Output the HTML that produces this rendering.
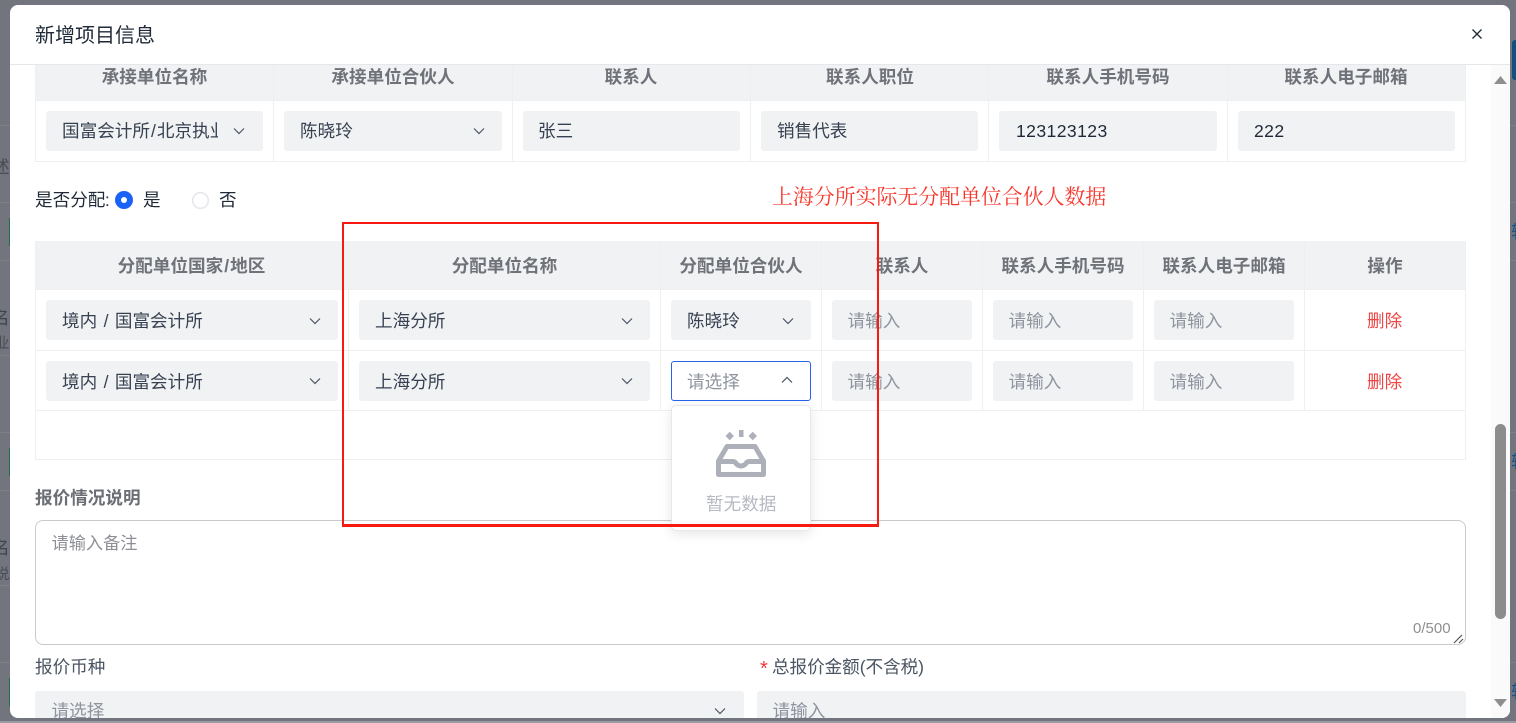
<!DOCTYPE html>
<html lang="zh-CN">
<head>
<meta charset="utf-8">
<title>新增项目信息</title>
<style>
html,body{margin:0;padding:0;width:1516px;height:723px;overflow:hidden;background:#72757d}
body{position:relative;font-family:"Liberation Sans","Noto Sans CJK SC",sans-serif;font-size:17.6px;color:#1f2937}
div,svg{position:absolute;box-sizing:border-box;white-space:nowrap}
em{font-style:normal}
.bl{height:1px;background:#7d8087}
.bg{color:#3f434c;font-size:17.6px;line-height:24px}
.bb{color:#1a5286;font-size:17.6px;line-height:24px}
#modal{left:10px;top:5px;width:1500px;height:713px;background:#fff;border-radius:8px;overflow:hidden}
#c{left:-10px;top:-5px;width:1516px;height:723px}
.h{background:#f1f2f4}
.th{top:0;height:24px;line-height:24px;font-weight:700;color:#6f7278;text-align:center}
.ln{background:#eeeff1}
.i{height:40px;background:#f1f2f4;border-radius:3px}
.t{height:24px;line-height:24px}
.p{color:#8f949e}
.lb{color:#4b5563}
</style>
</head>
<body>
<div class="bl" style="left:0;width:10px;top:125px"></div>
<div class="bl" style="left:0;width:10px;top:202px"></div>
<div class="bl" style="left:0;width:10px;top:260px"></div>
<div class="bl" style="left:0;width:10px;top:355px"></div>
<div class="bl" style="left:0;width:10px;top:432px"></div>
<div class="bl" style="left:0;width:10px;top:490px"></div>
<div class="bl" style="left:0;width:10px;top:585px"></div>
<div class="bl" style="left:0;width:10px;top:662px"></div>
<div class="bl" style="left:1510px;width:6px;top:125px"></div>
<div class="bl" style="left:1510px;width:6px;top:202px"></div>
<div class="bl" style="left:1510px;width:6px;top:260px"></div>
<div class="bl" style="left:1510px;width:6px;top:432px"></div>
<div class="bl" style="left:1510px;width:6px;top:490px"></div>
<div class="bl" style="left:1510px;width:6px;top:662px"></div>
<div style="left:0;top:721px;width:1516px;height:2px;background:#9a9ca2"></div>

<div class="bg" style="left:-8px;top:155px;color:#4a4d55">述</div>
<div class="bg" style="left:-8px;top:306px">名</div>
<div class="bg" style="left:-5px;top:332px;font-size:14.500px;color:#4a4d55">业</div>
<div class="bg" style="left:-8px;top:536px">名</div>
<div class="bg" style="left:-5px;top:563px;font-size:14.500px;color:#4a4d55">说</div>
<div style="left:9px;top:218px;width:1px;height:28px;background:#1f6b4a"></div>
<div style="left:9px;top:448px;width:1px;height:28px;background:#1f6b4a"></div>
<div style="left:9px;top:678px;width:1px;height:28px;background:#1f6b4a"></div>
<div style="left:1512px;top:40px;width:8px;height:40px;background:#14507f;border-radius:3px"></div>
<div class="bb" style="left:1511px;top:220px">转</div>
<div class="bb" style="left:1511px;top:450px">转</div>
<div class="bb" style="left:1511px;top:680px">转</div>

<div id="modal"><div id="c">
  <div class="t" style="left:35px;top:24px;font-size:20px;color:#1f2937">新增项目信息</div>
  <svg style="left:1470px;top:27px" width="14" height="14" viewBox="0 0 14 14"><path d="M2.500 2.500L11.500 11.500M11.500 2.500L2.500 11.500" stroke="#1f2937" stroke-width="1.300" fill="none"/></svg>

  <!-- table 1 -->
  <div class="h" style="left:35px;top:65px;width:1431px;height:35px"></div>
  <div class="ln" style="left:35px;top:100px;width:1431px;height:1px"></div>
  <div class="ln" style="left:35px;top:161px;width:1431px;height:1px"></div>
  <div class="ln" style="left:35px;top:65px;width:1px;height:97px"></div>
  <div class="ln" style="left:273px;top:65px;width:1px;height:97px"></div>
  <div class="ln" style="left:512px;top:65px;width:1px;height:97px"></div>
  <div class="ln" style="left:750px;top:65px;width:1px;height:97px"></div>
  <div class="ln" style="left:988px;top:65px;width:1px;height:97px"></div>
  <div class="ln" style="left:1227px;top:65px;width:1px;height:97px"></div>
  <div class="ln" style="left:1465px;top:65px;width:1px;height:97px"></div>
  <div class="th" style="left:35px;top:65px;width:239px">承接单位名称</div>
  <div class="th" style="left:274px;top:65px;width:238px">承接单位合伙人</div>
  <div class="th" style="left:512px;top:65px;width:238px">联系人</div>
  <div class="th" style="left:751px;top:65px;width:238px">联系人职位</div>
  <div class="th" style="left:989px;top:65px;width:238px">联系人手机号码</div>
  <div class="th" style="left:1227px;top:65px;width:238px">联系人电子邮箱</div>

  <div class="i" style="left:46px;top:111px;width:217px"></div>
  <div class="t" style="left:62px;top:119px;width:156px;overflow:hidden;color:#374151">国富会计所<em style="padding:0 1px">/</em>北京执业所</div>
  <svg style="left:233px;top:125px" width="12" height="12" viewBox="0 0 12 12"><path d="M1 3.500L6 8.500L11 3.500" stroke="#4b5563" stroke-width="1.200" fill="none"/></svg>
  <div class="i" style="left:284px;top:111px;width:218px"></div>
  <div class="t" style="left:300px;top:119px;color:#374151">陈晓玲</div>
  <svg style="left:473px;top:125px" width="12" height="12" viewBox="0 0 12 12"><path d="M1 3.500L6 8.500L11 3.500" stroke="#4b5563" stroke-width="1.200" fill="none"/></svg>
  <div class="i" style="left:523px;top:111px;width:217px"></div>
  <div class="t" style="left:538px;top:119px;color:#374151">张三</div>
  <div class="i" style="left:761px;top:111px;width:217px"></div>
  <div class="t" style="left:777px;top:119px;color:#374151">销售代表</div>
  <div class="i" style="left:999px;top:111px;width:218px"></div>
  <div class="t" style="left:1016px;top:119px;letter-spacing:.4px;color:#1f2937">123123123</div>
  <div class="i" style="left:1238px;top:111px;width:217px"></div>
  <div class="t" style="left:1254px;top:119px;letter-spacing:.4px;color:#1f2937">222</div>

  <!-- radio -->
  <div class="t" style="left:35px;top:188px;color:#1f2937">是否分配<em style="margin-left:-.5px">:</em></div>
  <svg style="left:114px;top:190px" width="20" height="20" viewBox="0 0 20 20"><circle cx="10" cy="10" r="9" fill="#1b63f5"/><circle cx="10" cy="10" r="3" fill="#fff"/></svg>
  <div class="t" style="left:143px;top:188px">是</div>
  <svg style="left:191px;top:191px" width="19" height="19" viewBox="0 0 19 19"><circle cx="9.500" cy="9.500" r="7.800" fill="#fff" stroke="#e5e7eb" stroke-width="1.600"/></svg>
  <div class="t" style="left:219px;top:188px">否</div>

  <div class="t" style="left:772px;top:185px;font-family:'Liberation Serif','Noto Serif CJK SC',serif;font-size:20.900px;color:#f8372c">上海分所实际无分配单位合伙人数据</div>

  <!-- table 2 -->
  <div class="h" style="left:35px;top:241px;width:1431px;height:48px"></div>
  <div class="ln" style="left:35px;top:289px;width:1431px;height:1px"></div>
  <div class="ln" style="left:35px;top:350px;width:1431px;height:1px"></div>
  <div class="ln" style="left:35px;top:410px;width:1431px;height:1px"></div>
  <div class="ln" style="left:35px;top:459px;width:1431px;height:1px"></div>
  <div class="ln" style="left:35px;top:241px;width:1px;height:219px"></div>
  <div class="ln" style="left:1465px;top:241px;width:1px;height:219px"></div>
  <div class="ln" style="left:348px;top:241px;width:1px;height:170px"></div>
  <div class="ln" style="left:660px;top:241px;width:1px;height:170px"></div>
  <div class="ln" style="left:821px;top:241px;width:1px;height:170px"></div>
  <div class="ln" style="left:982px;top:241px;width:1px;height:170px"></div>
  <div class="ln" style="left:1143px;top:241px;width:1px;height:170px"></div>
  <div class="ln" style="left:1304px;top:241px;width:1px;height:170px"></div>
  <div class="th" style="left:35px;top:254px;width:313px">分配单位国家<em style="padding:0 1px">/</em>地区</div>
  <div class="th" style="left:349px;top:254px;width:311px">分配单位名称</div>
  <div class="th" style="left:661px;top:254px;width:160px">分配单位合伙人</div>
  <div class="th" style="left:822px;top:254px;width:160px">联系人</div>
  <div class="th" style="left:983px;top:254px;width:160px">联系人手机号码</div>
  <div class="th" style="left:1144px;top:254px;width:160px">联系人电子邮箱</div>
  <div class="th" style="left:1305px;top:254px;width:160px">操作</div>

  <!-- row 1 -->
  <div class="i" style="left:46px;top:300px;width:292px"></div>
  <div class="t" style="left:62px;top:309px;color:#374151">境内 <em style="padding:0 1.500px">/</em> 国富会计所</div>
  <svg style="left:309px;top:315px" width="12" height="12" viewBox="0 0 12 12"><path d="M1 3.500L6 8.500L11 3.500" stroke="#4b5563" stroke-width="1.200" fill="none"/></svg>
  <div class="i" style="left:359px;top:300px;width:291px"></div>
  <div class="t" style="left:375px;top:309px;color:#374151">上海分所</div>
  <svg style="left:621px;top:315px" width="12" height="12" viewBox="0 0 12 12"><path d="M1 3.500L6 8.500L11 3.500" stroke="#4b5563" stroke-width="1.200" fill="none"/></svg>
  <div class="i" style="left:671px;top:300px;width:140px"></div>
  <div class="t" style="left:687px;top:309px;color:#374151">陈晓玲</div>
  <svg style="left:782px;top:315px" width="12" height="12" viewBox="0 0 12 12"><path d="M1 3.500L6 8.500L11 3.500" stroke="#4b5563" stroke-width="1.200" fill="none"/></svg>
  <div class="i" style="left:832px;top:300px;width:140px"></div>
  <div class="t p" style="left:847.500px;top:309px">请输入</div>
  <div class="i" style="left:993px;top:300px;width:140px"></div>
  <div class="t p" style="left:1008.500px;top:309px">请输入</div>
  <div class="i" style="left:1154px;top:300px;width:140px"></div>
  <div class="t p" style="left:1169.500px;top:309px">请输入</div>
  <div class="t" style="left:1367px;top:309px;color:#ef4444">删除</div>

  <!-- row 2 -->
  <div class="i" style="left:46px;top:361px;width:292px"></div>
  <div class="t" style="left:62px;top:370px;color:#374151">境内 <em style="padding:0 1.500px">/</em> 国富会计所</div>
  <svg style="left:309px;top:375px" width="12" height="12" viewBox="0 0 12 12"><path d="M1 3.500L6 8.500L11 3.500" stroke="#4b5563" stroke-width="1.200" fill="none"/></svg>
  <div class="i" style="left:359px;top:361px;width:291px"></div>
  <div class="t" style="left:375px;top:370px;color:#374151">上海分所</div>
  <svg style="left:621px;top:375px" width="12" height="12" viewBox="0 0 12 12"><path d="M1 3.500L6 8.500L11 3.500" stroke="#4b5563" stroke-width="1.200" fill="none"/></svg>
  <div style="left:671px;top:361px;width:140px;height:40px;background:#fff;border:1px solid #2563eb;border-radius:3px"></div>
  <div class="t p" style="left:687px;top:370px">请选择</div>
  <svg style="left:781px;top:374px" width="12" height="12" viewBox="0 0 12 12"><path d="M1 8.500L6 3.500L11 8.500" stroke="#4b5563" stroke-width="1.200" fill="none"/></svg>
  <div class="i" style="left:832px;top:361px;width:140px"></div>
  <div class="t p" style="left:847.500px;top:370px">请输入</div>
  <div class="i" style="left:993px;top:361px;width:140px"></div>
  <div class="t p" style="left:1008.500px;top:370px">请输入</div>
  <div class="i" style="left:1154px;top:361px;width:140px"></div>
  <div class="t p" style="left:1169.500px;top:370px">请输入</div>
  <div class="t" style="left:1367px;top:370px;color:#ef4444">删除</div>

  <!-- remark -->
  <div class="t" style="left:35px;top:486px;font-weight:700;color:#6b6e74">报价情况说明</div>
  <div style="left:35px;top:520px;width:1431px;height:125px;border:1px solid #cacaca;border-radius:8px;background:#fff"></div>
  <div class="t" style="left:51.500px;top:531px;font-size:17.200px;color:#8d8f94">请输入备注</div>
  <div class="t" style="left:1413px;top:617px;font-size:15px;color:#8f8f8f">0/500</div>
  <svg style="left:1453px;top:633px" width="12" height="11" viewBox="0 0 12 11"><path d="M1 10L9 2M6 10L10 6" stroke="#555" stroke-width="1.200" fill="none"/></svg>

  <div class="t lb" style="left:35px;top:655px">报价币种</div>
  <div class="t" style="left:760px;top:657px;font-size:20px;color:#f0353b">*</div>
  <div class="t lb" style="left:772px;top:655px;letter-spacing:-.05px">总报价金额(不含税)</div>
  <div class="i" style="left:35px;top:691px;width:709px"></div>
  <div class="t p" style="left:51.500px;top:699px">请选择</div>
  <svg style="left:714px;top:705px" width="12" height="12" viewBox="0 0 12 12"><path d="M1 3.500L6 8.500L11 3.500" stroke="#4b5563" stroke-width="1.200" fill="none"/></svg>
  <div class="i" style="left:757px;top:691px;width:709px"></div>
  <div class="t p" style="left:772.500px;top:699px">请输入</div>

  <!-- dropdown -->
  <div style="left:671px;top:405px;width:140px;height:126px;background:#fff;border:1px solid #e7e8eb;border-radius:5px;box-shadow:0 3px 12px rgba(0,0,0,.1)"></div>
  <svg style="left:710px;top:425px" width="62" height="58" viewBox="710 425 62 58">
    <path d="M739 430H743.500V437H739Z" fill="#adb0b9"/>
    <path d="M725.500 436L729.700 431.800L734 436L729.700 440.200Z" fill="#adb0b9"/>
    <path d="M748.500 436L752.700 431.800L757 436L752.700 440.200Z" fill="#adb0b9"/>
    <path d="M718.500 474.500V461L727 446.500H755L763.500 461V474.500Z" fill="none" stroke="#adb0b9" stroke-width="5" stroke-linejoin="round"/>
    <path d="M718.500 461.500H733Q735 461.500 736 463.500Q738 466 741 466Q744 466 746 463.500Q747 461.500 749 461.500H763.500" fill="none" stroke="#adb0b9" stroke-width="5"/>
  </svg>
  <div class="t" style="left:706px;top:492px;color:#b6b9c1">暂无数据</div>

  <!-- scrollbar -->
  <div style="left:1491px;top:65px;width:19px;height:653px;background:#fafafa"></div>
  <svg style="left:1493px;top:75px" width="15" height="10" viewBox="0 0 15 10"><path d="M7.500 1L14 9H1Z" fill="#8e8e8e"/></svg>
  <div style="left:1495px;top:424px;width:11px;height:195px;background:#8c8c8c;border-radius:5.500px"></div>
  <svg style="left:1493px;top:698px" width="15" height="10" viewBox="0 0 15 10"><path d="M1 1H14L7.500 9Z" fill="#8e8e8e"/></svg>

  <div style="left:10px;top:64px;width:1500px;height:1px;background:#e5e7eb"></div>
  <!-- annotation -->
  <div style="left:342px;top:222px;width:537px;height:305px;border:2px solid #f71a10;border-bottom-width:3px"></div>
</div></div>
</body>
</html>
